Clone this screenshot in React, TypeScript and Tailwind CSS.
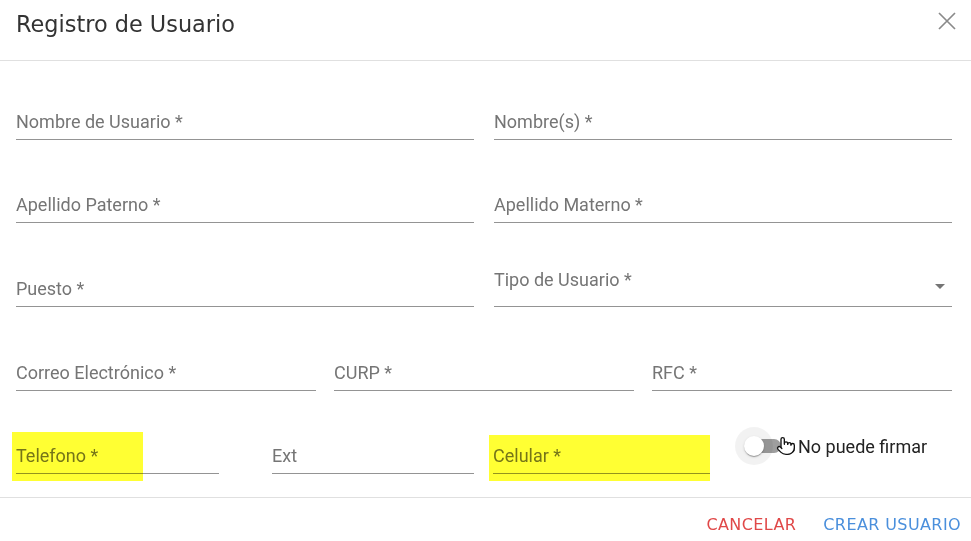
import { Pointer } from "lucide-react"

const Field = ({ label, className = "" }: { label: string; className?: string }) => (
  <div className={`h-[48px] flex items-end border-b border-[#949494] ${className}`}>
    <span className="pb-[7px] text-[18px] leading-[21px] text-[#757575] whitespace-nowrap">{label}</span>
  </div>
)

const Highlight = ({ className }: { className: string }) => (
  <div className={`absolute bg-[#ffff33] mix-blend-multiply pointer-events-none ${className}`}></div>
)

export default function App() {
  return (
    <div className="w-[971px] h-[541px] bg-white flex flex-col font-['Roboto',sans-serif] overflow-hidden">
      <div className="h-[61px] border-b border-[#e0e0e0] flex items-start justify-between pl-4 pr-[12px] pt-[9px] shrink-0">
        <h1 className="font-['DejaVu_Sans',sans-serif] text-[22.4px] leading-[30px] text-[#333] font-normal">
          Registro de Usuario
        </h1>
        <svg width="24" height="24" viewBox="0 0 24 24">
          <path d="M4 4 L20 20 M20 4 L4 20" stroke="#8a8a8a" strokeWidth="1.7" fill="none" />
        </svg>
      </div>

      <div className="flex-1 pl-4 pr-[19px] pt-[31px] flex flex-col gap-[35px]">
        <div className="grid grid-cols-2 gap-x-[20px]">
          <Field label="Nombre de Usuario *" />
          <Field label="Nombre(s) *" />
        </div>
        <div className="grid grid-cols-2 gap-x-[20px]">
          <Field label="Apellido Paterno *" />
          <Field label="Apellido Materno *" />
        </div>
        <div className="grid grid-cols-2 gap-x-[20px] mt-px">
          <Field label="Puesto *" />
          <div className="h-[48px] flex items-end justify-between border-b border-[#949494]">
            <span className="pb-[16px] text-[18px] leading-[21px] text-[#757575]">Tipo de Usuario *</span>
            <svg width="24" height="24" viewBox="0 0 24 24" className="mb-[8px]">
              <path d="M7 10l5 5 5-5z" fill="#757575" />
            </svg>
          </div>
        </div>
        <div className="grid grid-cols-3 gap-x-[18px] mt-px">
          <Field label="Correo Electrónico *" />
          <Field label="CURP *" />
          <Field label="RFC *" />
        </div>
        <div className="flex items-start">
          <div className="relative w-[203px]">
            <Field label="Telefono *" />
            <Highlight className="left-[-4px] top-[6px] w-[131px] h-[49px]" />
          </div>
          <Field label="Ext" className="w-[202px] ml-[53px]" />
          <div className="relative w-[217px] ml-[19px]">
            <Field label="Celular *" />
            <Highlight className="left-[-4px] top-[9px] w-[221px] h-[46px]" />
          </div>
          <div className="flex items-center ml-[25px] mt-[1px]">
            <div className="relative w-[58px] h-[38px]">
              <div className="absolute left-[12px] top-[12px] w-[34px] h-[14px] rounded-full bg-[#9e9e9e]"></div>
              <div className="absolute left-0 top-0 w-[38px] h-[38px] rounded-full bg-black/[0.05]"></div>
              <div className="absolute left-[9px] top-[9px] w-[20px] h-[20px] rounded-full bg-white shadow-[0_2px_1px_-1px_rgba(0,0,0,0.2),0_1px_1px_0_rgba(0,0,0,0.14),0_1px_3px_0_rgba(0,0,0,0.12)]"></div>
              <Pointer
                size={20}
                strokeWidth={1.6}
                fill="white"
                color="#111"
                className="absolute left-[41px] top-[9px]"
              />
            </div>
            <span className="ml-[5px] text-[18px] leading-[21px] text-[#222]">No puede firmar</span>
          </div>
        </div>
      </div>

      <div className="h-[44px] border-t border-[#e0e0e0] flex items-start justify-end pt-[16px] pr-[10px] shrink-0 font-['DejaVu_Sans',sans-serif] text-[16px] leading-[22px] tracking-[0.4px]">
        <button className="text-[#e04848]">CANCELAR</button>
        <button className="text-[#4a8fdc] ml-[27px]">CREAR USUARIO</button>
      </div>
    </div>
  )
}
